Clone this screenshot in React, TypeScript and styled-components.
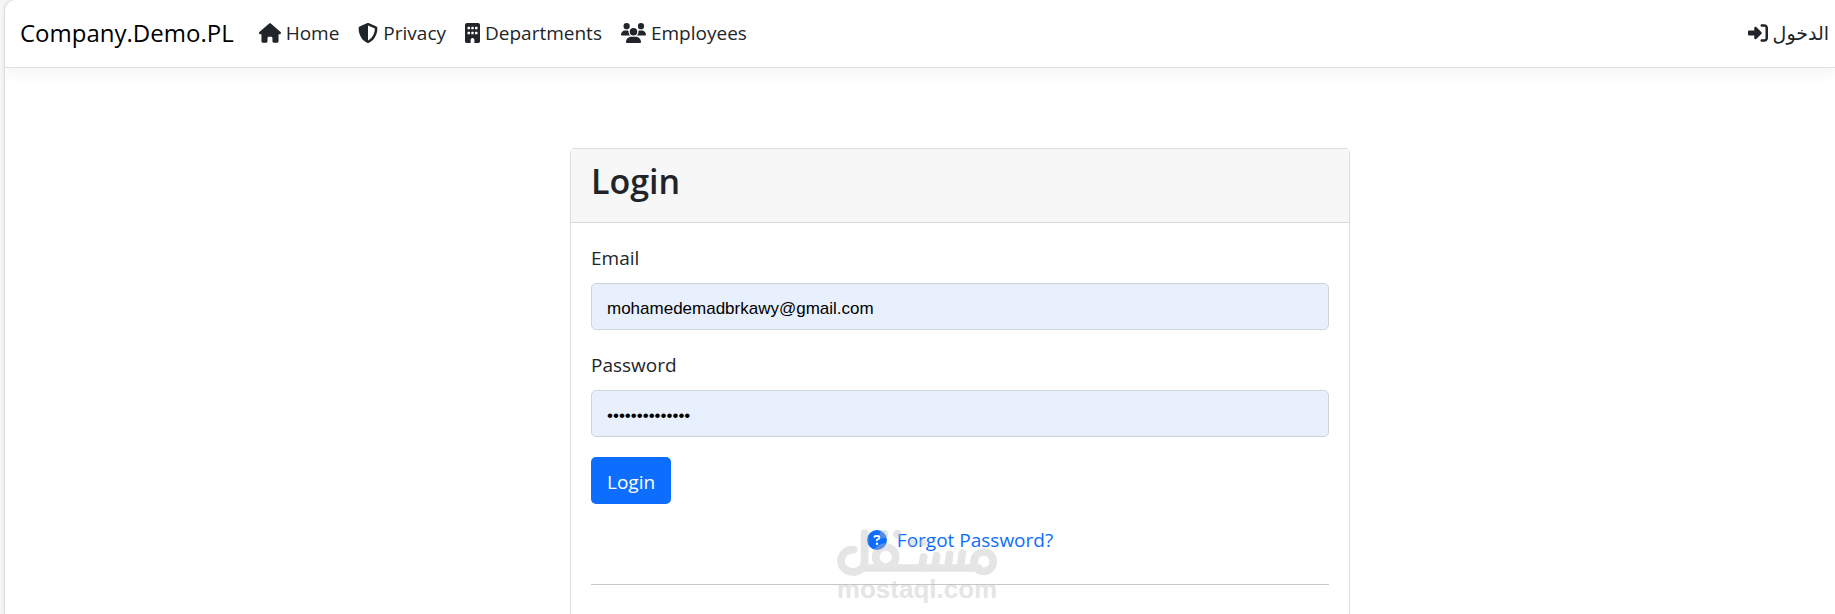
import React from "react";
import styled, { createGlobalStyle } from "styled-components";
import { FaHouse, FaShieldHalved, FaBuilding, FaUsers, FaRightToBracket, FaCircleQuestion } from "react-icons/fa6";

const GlobalStyle = createGlobalStyle`
  *, *::before, *::after { box-sizing: border-box; }
  body {
    margin: 0;
    background: #f5f5f5;
    color: #212529;
    font-family: "Open Sans", "Noto Sans", "DejaVu Sans", sans-serif;
    font-size: 19px;
    line-height: 30px;
  }
`;

const Page = styled.div`
  position: relative;
  margin-left: 5px;
  min-height: 100vh;
  background: #fff;
  border-top-left-radius: 10px;
  box-shadow: 0 0 3px rgba(0, 0, 0, 0.25);
  overflow: hidden;
`;

const Header = styled.header`
  display: flex;
  align-items: center;
  min-height: 68px;
  padding: 0 6px 2px 15px;
  border-bottom: 1px solid #dee2e6;
  box-shadow: 0 5px 15px rgba(0, 0, 0, 0.05);
`;

const Brand = styled.a`
  margin-right: 25px;
  color: #000;
  font-size: 24px;
  text-decoration: none;
`;

const Nav = styled.nav`
  display: flex;
  flex: 1;
  gap: 19px;
`;

const NavLink = styled.a<{ $icon: number }>`
  display: inline-flex;
  align-items: center;
  gap: 5px;
  color: #212529;
  text-decoration: none;

  svg {
    flex: none;
    width: ${(p) => p.$icon}px;
    height: 20px;
  }
`;

const Main = styled.main`
  padding: 80px 0 0 80px;
`;

const Card = styled.section`
  max-width: 780px;
  margin: 0 auto;
  border: 1px solid #dcdcdc;
  border-bottom: 0;
  border-radius: 5px 5px 0 0;
`;

const CardHeader = styled.div`
  padding: 11px 20px 19px;
  background: #f7f7f7;
  border-bottom: 1px solid #d8d8d8;
`;

const Title = styled.h1`
  margin: 0;
  font-size: 34px;
  font-weight: 600;
  line-height: 43px;
`;

const Form = styled.form`
  padding: 20px 20px 30px;
`;

const Field = styled.div`
  display: flex;
  flex-direction: column;
  gap: 10px;
  margin-bottom: 20px;
`;

const Label = styled.label`
  line-height: 30px;
`;

const Input = styled.input`
  width: 100%;
  height: 47px;
  padding: 5px 15px 0;
  border: 1px solid #ced4da;
  border-radius: 5px;
  background: #e8f0fe;
  color: #000;
  font-family: "Liberation Sans", sans-serif;
  font-size: 17px;
`;

const SubmitButton = styled.button`
  display: block;
  height: 47px;
  padding: 2px 16px 0;
  border: 0;
  border-radius: 5px;
  background: #0d6efd;
  color: #fff;
  font: inherit;
`;

const ForgotRow = styled.div`
  display: flex;
  justify-content: center;
  margin: 21px 0 29px;
`;

const ForgotLink = styled.a`
  display: inline-flex;
  align-items: center;
  gap: 10px;
  color: #0d6efd;
  text-decoration: none;

  svg { width: 20px; height: 20px; }
`;

const Divider = styled.hr`
  height: 1px;
  margin: 0;
  border: 0;
  background: #c8c9ca;
`;

const Watermark = styled.div`
  position: absolute;
  left: 50%;
  bottom: 12px;
  display: flex;
  flex-direction: column;
  align-items: center;
  width: 160px;
  margin-left: -83px;
  color: #c0c0c0;
  opacity: 0.4;
  pointer-events: none;
`;

const WatermarkText = styled.span`
  font-family: "Liberation Sans", sans-serif;
  font-size: 26px;
  font-weight: 700;
  line-height: 27px;
`;

function MostaqlLogo() {
  return (
    <svg width="160" height="47" viewBox="0 0 480 141" fill="none" stroke="currentColor" strokeWidth="23" strokeLinecap="round" strokeLinejoin="round" role="img" aria-label="مستقل">
      <path d="M50 62C26 62 12 78 12 96C12 115 28 129 48 129C68 129 83 115 83 96V12M78 117H425M260 84L254 117M299 80L293 117M338 76L332 117M376 72L370 117" />
      <circle cx="146" cy="84" r="30" />
      <circle cx="440" cy="98" r="29" />
      <g fill="currentColor" stroke="none">
        <circle cx="141" cy="15" r="13" />
        <circle cx="181" cy="15" r="13" />
        <circle cx="226" cy="41" r="11" />
        <circle cx="258" cy="41" r="11" />
      </g>
    </svg>
  );
}

export default function App() {
  return (
    <>
      <GlobalStyle />
      <Page>
        <Header>
          <Brand href="#">Company.Demo.PL</Brand>
          <Nav>
            <NavLink href="#" $icon={22}><FaHouse />Home</NavLink>
            <NavLink href="#" $icon={20}><FaShieldHalved />Privacy</NavLink>
            <NavLink href="#" $icon={15}><FaBuilding />Departments</NavLink>
            <NavLink href="#" $icon={25}><FaUsers />Employees</NavLink>
          </Nav>
          <NavLink href="#" $icon={20}><FaRightToBracket /><span lang="ar">الدخول</span></NavLink>
        </Header>
        <Main>
          <Card>
            <CardHeader><Title>Login</Title></CardHeader>
            <Form onSubmit={(e) => e.preventDefault()}>
              <Field>
                <Label htmlFor="email">Email</Label>
                <Input id="email" type="email" defaultValue="mohamedemadbrkawy@gmail.com" />
              </Field>
              <Field>
                <Label htmlFor="password">Password</Label>
                <Input id="password" type="password" defaultValue="12345678901234" />
              </Field>
              <SubmitButton type="submit">Login</SubmitButton>
              <ForgotRow>
                <ForgotLink href="#"><FaCircleQuestion />Forgot Password?</ForgotLink>
              </ForgotRow>
              <Divider />
            </Form>
          </Card>
        </Main>
        <Watermark>
          <MostaqlLogo />
          <WatermarkText>mostaql.com</WatermarkText>
        </Watermark>
      </Page>
    </>
  );
}
